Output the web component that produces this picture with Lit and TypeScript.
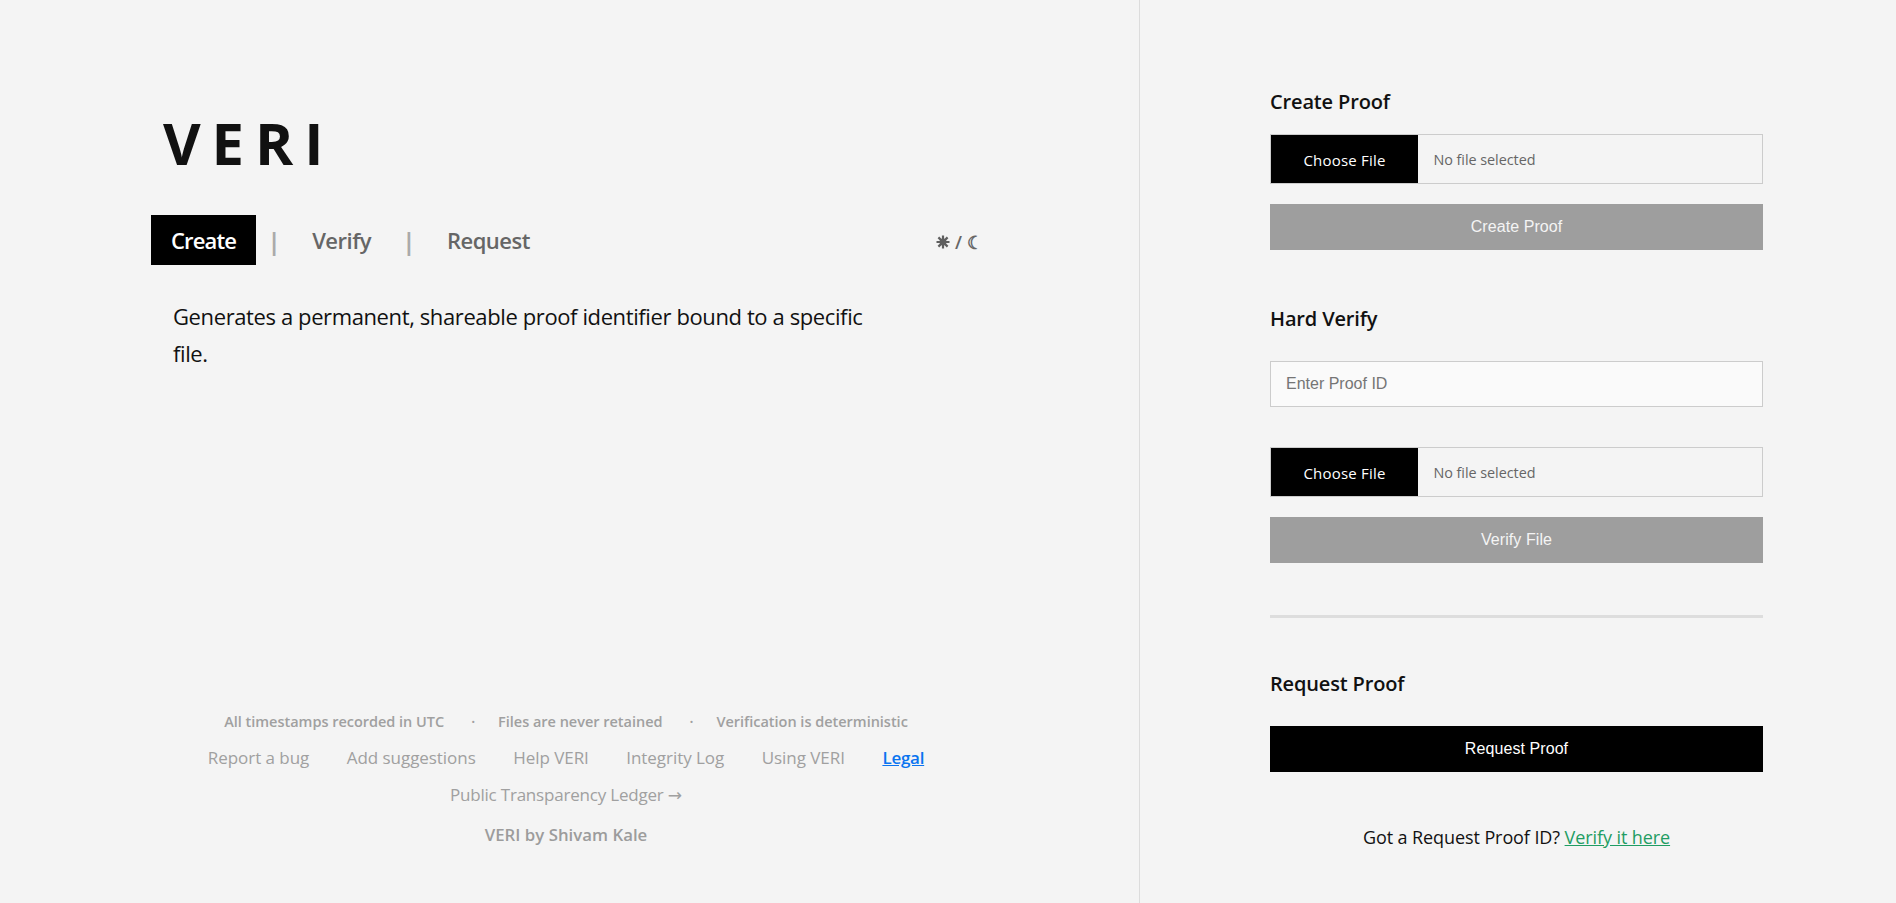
import { LitElement, html, css } from "lit";
import { customElement } from "lit/decorators.js";

const sans = css`"Open Sans", "Noto Sans", sans-serif`;

@customElement("app-root")
export class AppRoot extends LitElement {
  static styles = css`
    :host { display: block; height: 903px; overflow: hidden; background: #f4f4f4; font-family: ${sans}; color: #111; }
    * { box-sizing: border-box; }
    .page { display: flex; height: 903px; }
    .left { width: 1140px; border-right: 1px solid #dcdcdc; padding: 0 158px 0 151px; display: flex; flex-direction: column; flex: none; }
    .brand { margin: 103px 0 0 12px; font-size: 58px; line-height: 79px; font-weight: 700; letter-spacing: 10.9px; color: #111; height: 79px; }
    .nav { display: flex; align-items: center; gap: 18px; margin-top: 33px; height: 50px; font-size: 22px; font-weight: 600; color: #666; }
    .tab { padding: 0 20px; height: 50px; display: flex; align-items: center; letter-spacing: -0.5px; }
    .tab.active { background: #000; color: #fff; font-weight: 600; letter-spacing: -0.85px; }
    .sep { color: #aaa; font-weight: 700; width: 0; font-size: 24px; display: flex; justify-content: center; }
    .toggle { margin-left: auto; margin-right: -2px; padding-top: 4px; display: flex; align-items: center; gap: 5px; font-size: 18px; font-weight: 600; color: #666; white-space: nowrap; }
    .sun { width: 14px; height: 14px; display: block; stroke: #5f5f5f; stroke-width: 2.2; fill: #5f5f5f; }
    .desc { margin: 33px 0 0 22px; width: 700px; font-size: 22px; line-height: 37px; color: #111; letter-spacing: -0.39px; }
    .footer { margin-top: auto; padding-bottom: 57px; display: flex; flex-direction: column; align-items: center; color: #a0a0a0; }
    .facts { display: flex; gap: 24px; font-size: 14.5px; font-weight: 600; line-height: 20px; letter-spacing: -0.02px; color: #a0a0a0; }
    .dot { margin: 0 -1px 0 3px; }
    .links { display: flex; gap: 37.5px; font-size: 17px; line-height: 24px; margin-top: 14px; letter-spacing: -0.05px; }
    .legal { color: #0a74f0; font-weight: 600; letter-spacing: -0.26px; text-decoration: underline; }
    .ledger { font-size: 17px; line-height: 24px; margin-top: 13px; letter-spacing: -0.2px; }
    .arrow { font-family: "DejaVu Sans", sans-serif; letter-spacing: 0; }
    .by { font-size: 16.8px; font-weight: 600; line-height: 22px; margin-top: 17px; letter-spacing: 0.02px; color: #9c9c9c; }
    .right { flex: 1; padding: 88px 0 0 130px; }
    .col { width: 493px; display: flex; flex-direction: column; }
    h3 { margin: 0; font-size: 20px; font-weight: 600; line-height: 28px; color: #111; letter-spacing: -0.15px; }
    .file { display: flex; align-items: center; height: 50px; border: 1px solid #ccc; margin-top: 18px; }
    .pick { width: 147px; height: 48px; background: #000; color: #fff; display: flex; align-items: center; justify-content: center; font-size: 15px; padding-top: 1px; letter-spacing: 0.2px; }
    .none { margin-left: 15.5px; font-size: 14.4px; color: #666; letter-spacing: -0.05px; }
    .btn { height: 46px; margin-top: 20px; display: flex; align-items: center; justify-content: center; font-family: "Liberation Sans", Arial, sans-serif; font-size: 16px; letter-spacing: 0.08px; color: #f4f4f4; background: #9e9e9e; }
    .btn.dark { background: #000; color: #fff; margin-top: 28px; }
    .hv { margin-top: 55px; }
    .input { height: 46px; margin-top: 28px; border: 1px solid #ccc; background: #fafafa; display: flex; align-items: center; padding-left: 15px; font-family: "Liberation Sans", Arial, sans-serif; font-size: 16px; color: #757575; }
    .file.gap40 { margin-top: 40px; }
    .rule { height: 3px; background: #ddd; margin-top: 52px; }
    .rp { margin-top: 52px; }
    .got { margin-top: 52px; text-align: center; font-size: 18px; line-height: 26px; color: #111; letter-spacing: -0.09px; }
    .got a { color: #1f9d63; text-decoration: underline; }
  `;

  render() {
    return html`
      <div class="page">
        <section class="left">
          <div class="brand">VERI</div>
          <nav class="nav">
            <div class="tab active">Create</div>
            <span class="sep">|</span>
            <div class="tab">Verify</div>
            <span class="sep">|</span>
            <div class="tab">Request</div>
            <div class="toggle">
              <svg class="sun" viewBox="0 0 14 14" aria-hidden="true">
                <circle cx="7" cy="7" r="3.4" stroke="none"></circle>
                <path d="M7 .5v13M.5 7h13M2.4 2.4l9.2 9.2M11.6 2.4l-9.2 9.2" fill="none"></path>
              </svg>
              <span>/</span>
              <span>☾</span>
            </div>
          </nav>
          <p class="desc">Generates a permanent, shareable proof identifier bound to a specific file.</p>
          <footer class="footer">
            <div class="facts">
              <span>All timestamps recorded in UTC</span><span class="dot">·</span>
              <span>Files are never retained</span><span class="dot">·</span>
              <span>Verification is deterministic</span>
            </div>
            <div class="links">
              <span>Report a bug</span><span>Add suggestions</span><span>Help VERI</span>
              <span>Integrity Log</span><span>Using VERI</span><span class="legal">Legal</span>
            </div>
            <div class="ledger">Public Transparency Ledger <span class="arrow">→</span></div>
            <div class="by">VERI by Shivam Kale</div>
          </footer>
        </section>
        <section class="right">
          <div class="col">
            <h3>Create Proof</h3>
            <div class="file"><div class="pick">Choose File</div><div class="none">No file selected</div></div>
            <div class="btn">Create Proof</div>
            <h3 class="hv">Hard Verify</h3>
            <div class="input">Enter Proof ID</div>
            <div class="file gap40"><div class="pick">Choose File</div><div class="none">No file selected</div></div>
            <div class="btn">Verify File</div>
            <div class="rule"></div>
            <h3 class="rp">Request Proof</h3>
            <div class="btn dark">Request Proof</div>
            <div class="got">Got a Request Proof ID? <a>Verify it here</a></div>
          </div>
        </section>
      </div>
    `;
  }
}
